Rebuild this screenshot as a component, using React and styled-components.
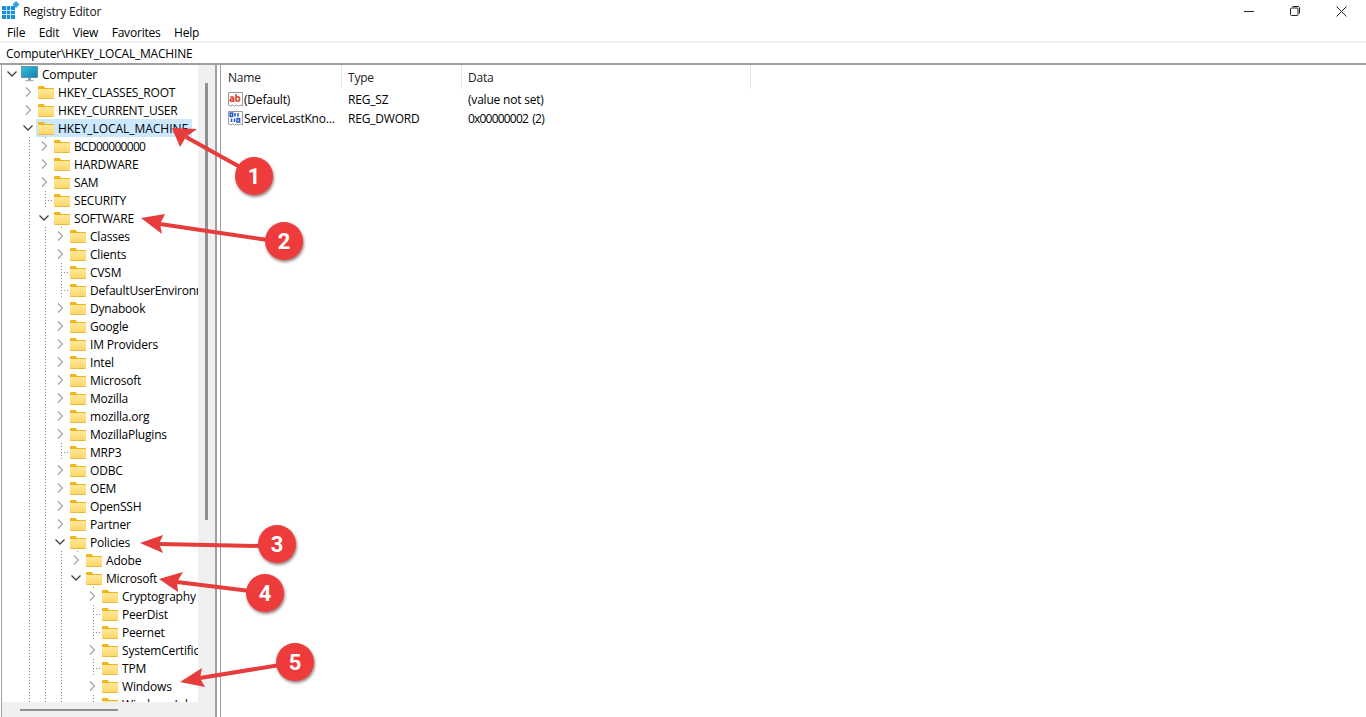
import React from "react";
import styled, { createGlobalStyle } from "styled-components";

const GlobalStyle = createGlobalStyle`
    html, body {
        margin: 0;
        padding: 0;
        background: #ffffff;
    }
    body {
        font-family: "Open Sans", "Liberation Sans", sans-serif;
        font-size: 12px;
        letter-spacing: -0.2px;
        color: #000000;
    }
`;

const Window = styled.div`
    position: relative;
    display: flex;
    flex-direction: column;
    width: 1366px;
    height: 717px;
    overflow: hidden;
    background: #ffffff;
`;

const TitleBar = styled.div`
    display: flex;
    align-items: center;
    height: 23px;
    padding: 0 2px 1px 0;
    box-sizing: border-box;
    flex: none;
`;

const AppIconBox = styled.div`
    display: flex;
    width: 23px;
    height: 20px;
    padding-left: 2px;
    box-sizing: border-box;
`;

const WindowTitle = styled.span`
    flex: 1;
    font-size: 12px;
    color: #111111;
`;

const WinButton = styled.div`
    display: flex;
    align-items: center;
    justify-content: center;
    width: 46px;
    height: 22px;
`;

const MenuBar = styled.div`
    display: flex;
    align-items: center;
    gap: 13.5px;
    height: 18px;
    padding-left: 7px;
    flex: none;
`;

const MenuItem = styled.span`
    font-size: 12px;
`;

const AddressBar = styled.div`
    display: flex;
    align-items: center;
    height: 20px;
    padding-left: 6px;
    flex: none;
    border-top: 2px solid #f0f0f0;
    border-bottom: 2px solid #a0a0a0;
`;

const Panes = styled.div`
    display: flex;
    flex: 1;
    min-height: 0;
`;

const TreePane = styled.div`
    display: grid;
    grid-template-columns: 196px 17px;
    grid-template-rows: 1fr 15px;
    width: 213px;
    flex: none;
    margin-left: 1px;
    border-left: 1px solid #a0a0a0;
    min-height: 0;
`;

const TreeList = styled.div`
    overflow: hidden;
    min-height: 0;
`;

const Row = styled.div`
    display: flex;
    align-items: center;
    height: 18px;
    width: 300px;
    padding-left: 2px;
`;

const Guide = styled.span`
    width: 16px;
    height: 18px;
    flex: none;
    background-image: ${(props) =>
        props.$line
            ? "repeating-linear-gradient(to bottom, #8a8a8a 0 1px, transparent 1px 3px)"
            : "none"};
    background-size: 1px 100%;
    background-repeat: no-repeat;
    background-position: 9px 0;
`;

const Expander = styled.span`
    position: relative;
    display: flex;
    align-items: center;
    justify-content: center;
    width: 16px;
    height: 18px;
    flex: none;
`;

const Stub = styled.span`
    position: absolute;
    left: 9px;
    top: 0;
    width: 1px;
    height: ${(props) => (props.$full ? "18px" : "3px")};
    background-image: repeating-linear-gradient(to bottom, #8a8a8a 0 1px, transparent 1px 3px);
`;

const LeafLine = styled.span`
    display: block;
    width: 7px;
    height: 1px;
    margin-left: 9px;
    background-image: repeating-linear-gradient(to right, #8a8a8a 0 1px, transparent 1px 3px);
`;

const Label = styled.div`
    display: flex;
    align-items: center;
    height: 18px;
    background: ${(props) => (props.$selected ? "#cce8ff" : "transparent")};
    padding: 0 4px 0 ${(props) => (props.$root ? "1px" : "2px")};
`;

const RowText = styled.span`
    margin-left: 4px;
    white-space: nowrap;
    font-size: 12px;
    letter-spacing: ${(props) => props.$track || "-0.2px"};
`;

const VTrack = styled.div`
    display: flex;
    justify-content: center;
    background: #f0f0f0;
    grid-row: 1 / span 2;
    grid-column: 2;
    padding-top: 18px;
`;

const VThumb = styled.div`
    width: 3px;
    height: 437px;
    background: #8f8f8f;
`;

const HTrack = styled.div`
    display: flex;
    align-items: center;
    padding-left: 18px;
    background: #f0f0f0;
`;

const HThumb = styled.div`
    width: 98px;
    height: 2px;
    background: #8f8f8f;
`;

const Splitter = styled.div`
    width: 3px;
    flex: none;
    border-left: 2px solid #a0a0a0;
    border-right: 1px solid #a0a0a0;
`;

const ListPane = styled.div`
    flex: 1;
    min-width: 0;
`;

const ColumnHeader = styled.div`
    display: grid;
    grid-template-columns: 121px 120px 289px;
    height: 24px;
    margin-bottom: 1px;
`;

const HeaderCell = styled.div`
    display: flex;
    align-items: center;
    padding-left: 6px;
    border-right: 1px solid #e5e5e5;
    color: #222222;

    &:first-child {
        padding-left: 7px;
    }
`;

const ValueRow = styled.div`
    display: grid;
    grid-template-columns: 121px 120px 289px;
    height: 19px;
    align-items: center;
`;

const ValueName = styled.div`
    display: flex;
    align-items: center;
    padding-left: 6px;
    white-space: nowrap;
`;

const ValueCell = styled.div`
    padding-left: 6px;
    white-space: nowrap;
    letter-spacing: ${(props) => props.$track || "-0.2px"};
    word-spacing: ${(props) => (props.$track ? "2px" : "0")};
`;

const Overlay = styled.svg`
    position: absolute;
    left: 0;
    top: 0;
    width: 1366px;
    height: 717px;
    pointer-events: none;
`;

const Badge = styled.div`
    position: absolute;
    left: ${(props) => props.$x - 19}px;
    top: ${(props) => props.$y - 19}px;
    display: flex;
    align-items: center;
    justify-content: center;
    width: 38px;
    height: 38px;
    border-radius: 50%;
    background: #ee3b3b;
    box-shadow: 1px 2px 3px rgba(70, 20, 20, 0.55);
    color: #ffffff;
    font-family: "Roboto", "Liberation Sans", sans-serif;
    font-size: 22px;
    font-weight: 700;
    letter-spacing: 0;
`;

const AppIcon = () => (
    <svg width="18" height="18" viewBox="0 0 18 18">
        <rect x="0" y="5" width="13" height="13" fill="#1b8fd6" />
        <path d="M4.5 5v13M8.5 5v13M0 9.5h13M0 13.5h13" stroke="#bfe6fa" strokeWidth="1" />
        <path d="M14 0l3.5 3.5L14 7l-3.5-3.5z" fill="#35a7e0" />
    </svg>
);

const ComputerIcon = () => (
    <svg width="17" height="16" viewBox="0 0 17 16">
        <defs>
            <linearGradient id="screen" x1="0" y1="0" x2="1" y2="1">
                <stop offset="0" stopColor="#35c0dc" />
                <stop offset="1" stopColor="#0f7fae" />
            </linearGradient>
        </defs>
        <rect x="0.5" y="0.5" width="16" height="11" fill="url(#screen)" stroke="#3c6c86" strokeWidth="0.6" />
        <rect x="7" y="12" width="3" height="2" fill="#8aa0ae" />
        <rect x="4.5" y="14" width="8" height="1.2" fill="#9fb2be" />
    </svg>
);

const FolderIcon = () => (
    <svg width="16" height="13" viewBox="0 0 16 13" style={{ flex: "none" }}>
        <defs>
            <linearGradient id="folderBody" x1="0" y1="0" x2="0" y2="1">
                <stop offset="0" stopColor="#ffe89a" />
                <stop offset="1" stopColor="#fdd566" />
            </linearGradient>
        </defs>
        <path d="M0 1.2C0 .5.5 0 1.2 0h4.3l1.8 2H16v2H0z" fill="#f4b41c" />
        <path d="M0 3h16v9c0 .6-.4 1-1 1H1c-.6 0-1-.4-1-1z" fill="url(#folderBody)" />
        <path d="M.5 12.6h15" stroke="#e6ae2e" strokeWidth="0.8" />
    </svg>
);

const ChevronRight = () => (
    <svg width="10" height="12" viewBox="0 0 10 12">
        <path d="M3 1.5L7.5 6 3 10.5" fill="none" stroke="#a6a6a6" strokeWidth="1.3" />
    </svg>
);

const ChevronDown = () => (
    <svg width="12" height="10" viewBox="0 0 12 10">
        <path d="M1.5 2.5L6 7l4.5-4.5" fill="none" stroke="#404040" strokeWidth="1.3" />
    </svg>
);

const ValueIcon = ({ kind }) => (
    <svg width="17" height="17" viewBox="0 0 17 17" style={{ flex: "none" }}>
        <path d="M1.5 1.5h14v13.5l-2-1-2 1-2-1-2 1-2-1-2 1-2-1z" fill="#ffffff" stroke="#9a9a9a" strokeWidth="1" />
        {kind === "sz" ? (
            <g fill="none" stroke="#d8452a" strokeWidth="1.6">
                <path d="M3.2 6h2.4c.7 0 1 .4 1 1v3.2H4.4c-.8 0-1.2-.5-1.2-1.1 0-.7.5-1.1 1.2-1.1h2.2" />
                <path d="M9 3v7M9 6.3c.5-.4 1-.5 1.6-.5 1.2 0 2 .9 2 2.2s-.8 2.2-2 2.2c-.6 0-1.1-.2-1.6-.6" />
            </g>
        ) : (
            <g fill="none" stroke="#2357c8" strokeWidth="1.5">
                <rect x="3.2" y="3" width="2.4" height="3.4" />
                <path d="M8 3v3.4M11 3v3.4" />
                <path d="M4.5 8.5v3.6M7.5 8.5v3.6" />
                <rect x="10" y="8.6" width="2.6" height="3.4" />
            </g>
        )}
    </svg>
);

const tree = [
    { name: "HKEY_CLASSES_ROOT", depth: 1, state: "closed", lines: [] },
    { name: "HKEY_CURRENT_USER", depth: 1, state: "closed", lines: [] },
    { name: "HKEY_LOCAL_MACHINE", depth: 1, state: "open", lines: [], selected: true, track: "-0.05px" },
    { name: "BCD00000000", depth: 2, state: "closed", lines: [1], stub: true, track: "-0.7px" },
    { name: "HARDWARE", depth: 2, state: "closed", lines: [1], track: "-0.1px" },
    { name: "SAM", depth: 2, state: "closed", lines: [1] },
    { name: "SECURITY", depth: 2, state: "leaf", lines: [1] },
    { name: "SOFTWARE", depth: 2, state: "open", lines: [1] },
    { name: "Classes", depth: 3, state: "closed", lines: [1, 2], stub: true },
    { name: "Clients", depth: 3, state: "closed", lines: [1, 2] },
    { name: "CVSM", depth: 3, state: "leaf", lines: [1, 2] },
    { name: "DefaultUserEnvironment", depth: 3, state: "leaf", lines: [1, 2] },
    { name: "Dynabook", depth: 3, state: "closed", lines: [1, 2] },
    { name: "Google", depth: 3, state: "closed", lines: [1, 2] },
    { name: "IM Providers", depth: 3, state: "closed", lines: [1, 2] },
    { name: "Intel", depth: 3, state: "closed", lines: [1, 2] },
    { name: "Microsoft", depth: 3, state: "closed", lines: [1, 2] },
    { name: "Mozilla", depth: 3, state: "closed", lines: [1, 2] },
    { name: "mozilla.org", depth: 3, state: "closed", lines: [1, 2] },
    { name: "MozillaPlugins", depth: 3, state: "closed", lines: [1, 2] },
    { name: "MRP3", depth: 3, state: "leaf", lines: [1, 2] },
    { name: "ODBC", depth: 3, state: "closed", lines: [1, 2] },
    { name: "OEM", depth: 3, state: "closed", lines: [1, 2] },
    { name: "OpenSSH", depth: 3, state: "closed", lines: [1, 2] },
    { name: "Partner", depth: 3, state: "closed", lines: [1, 2] },
    { name: "Policies", depth: 3, state: "open", lines: [1, 2] },
    { name: "Adobe", depth: 4, state: "closed", lines: [1, 2, 3], stub: true },
    { name: "Microsoft", depth: 4, state: "open", lines: [1, 2, 3] },
    { name: "Cryptography", depth: 5, state: "closed", lines: [1, 2, 3], stub: true },
    { name: "PeerDist", depth: 5, state: "leaf", lines: [1, 2, 3] },
    { name: "Peernet", depth: 5, state: "leaf", lines: [1, 2, 3] },
    { name: "SystemCertificates", depth: 5, state: "closed", lines: [1, 2, 3] },
    { name: "TPM", depth: 5, state: "leaf", lines: [1, 2, 3] },
    { name: "Windows", depth: 5, state: "closed", lines: [1, 2, 3] },
    { name: "Windows Ink", depth: 5, state: "leaf", lines: [1, 2, 3] },
];

const TreeRow = ({ item }) => (
    <Row>
        <Guide />
        {Array.from({ length: item.depth - 1 }, (_, i) => (
            <Guide key={i} $line={item.lines.includes(i + 1)} />
        ))}
        <Expander>
            {item.stub && <Stub />}
            {item.state === "closed" && <ChevronRight />}
            {item.state === "open" && <ChevronDown />}
            {item.state === "leaf" && <Stub $full />}
            {item.state === "leaf" && <LeafLine />}
        </Expander>
        <Label $selected={item.selected}>
            <FolderIcon />
            <RowText $track={item.track}>{item.name}</RowText>
        </Label>
    </Row>
);

// swept-back heads, the notch point is where the shaft meets the head
const arrows = [
    { n: 1, cx: 254, cy: 176, shaft: "M240 167L186 137", head: "172,128 197,129 186,137 180,147" },
    { n: 2, cx: 284, cy: 241, shaft: "M268 240L160 224", head: "141,218 165,214 160,224 162,234" },
    { n: 3, cx: 277, cy: 544, shaft: "M262 546L159 544", head: "140,543 163,535 159,544 163,553" },
    { n: 4, cx: 265, cy: 593, shaft: "M250 591L177 582", head: "159,579 183,572 177,582 178,592" },
    { n: 5, cx: 295, cy: 662, shaft: "M280 665L200 678", head: "180,682 202,668 200,678 205,687" },
];

const App = () => (
    <Window>
        <GlobalStyle />
        <TitleBar>
            <AppIconBox>
                <AppIcon />
            </AppIconBox>
            <WindowTitle>Registry Editor</WindowTitle>
            <WinButton>
                <svg width="10" height="10" viewBox="0 0 10 10">
                    <path d="M0 5.5h10" stroke="#222222" strokeWidth="1" />
                </svg>
            </WinButton>
            <WinButton>
                <svg width="10" height="10" viewBox="0 0 10 10">
                    <rect x="0.5" y="2" width="7.5" height="7.5" rx="1" fill="none" stroke="#222222" />
                    <path d="M2.5 .5h5.5c.9 0 1.5.6 1.5 1.5v5.5" fill="none" stroke="#222222" />
                </svg>
            </WinButton>
            <WinButton>
                <svg width="11" height="11" viewBox="0 0 11 11">
                    <path d="M.5 .5l10 10M10.5 .5l-10 10" stroke="#222222" strokeWidth="1" />
                </svg>
            </WinButton>
        </TitleBar>
        <MenuBar>
            <MenuItem>File</MenuItem>
            <MenuItem>Edit</MenuItem>
            <MenuItem>View</MenuItem>
            <MenuItem>Favorites</MenuItem>
            <MenuItem>Help</MenuItem>
        </MenuBar>
        <AddressBar>Computer\HKEY_LOCAL_MACHINE</AddressBar>
        <Panes>
            <TreePane>
                <TreeList>
                    <Row>
                        <Expander>
                            <ChevronDown />
                        </Expander>
                        <Label $root>
                            <ComputerIcon />
                            <RowText>Computer</RowText>
                        </Label>
                    </Row>
                    {tree.map((item) => (
                        <TreeRow key={`${item.depth}-${item.name}`} item={item} />
                    ))}
                </TreeList>
                <VTrack>
                    <VThumb />
                </VTrack>
                <HTrack>
                    <HThumb />
                </HTrack>
            </TreePane>
            <Splitter />
            <ListPane>
                <ColumnHeader>
                    <HeaderCell>Name</HeaderCell>
                    <HeaderCell>Type</HeaderCell>
                    <HeaderCell>Data</HeaderCell>
                </ColumnHeader>
                <ValueRow>
                    <ValueName>
                        <ValueIcon kind="sz" />
                        (Default)
                    </ValueName>
                    <ValueCell>REG_SZ</ValueCell>
                    <ValueCell>(value not set)</ValueCell>
                </ValueRow>
                <ValueRow>
                    <ValueName>
                        <ValueIcon kind="dword" />
                        ServiceLastKno...
                    </ValueName>
                    <ValueCell>REG_DWORD</ValueCell>
                    <ValueCell $track="-0.8px">0x00000002 (2)</ValueCell>
                </ValueRow>
            </ListPane>
        </Panes>
        <Overlay viewBox="0 0 1366 717">
            {arrows.map((a) => (
                <g key={a.n}>
                    <path d={a.shaft} stroke="#e63c3c" strokeWidth="4" fill="none" />
                    <polygon points={a.head} fill="#e63c3c" />
                </g>
            ))}
        </Overlay>
        {arrows.map((a) => (
            <Badge key={a.n} $x={a.cx} $y={a.cy}>
                {a.n}
            </Badge>
        ))}
    </Window>
);

export default App;
